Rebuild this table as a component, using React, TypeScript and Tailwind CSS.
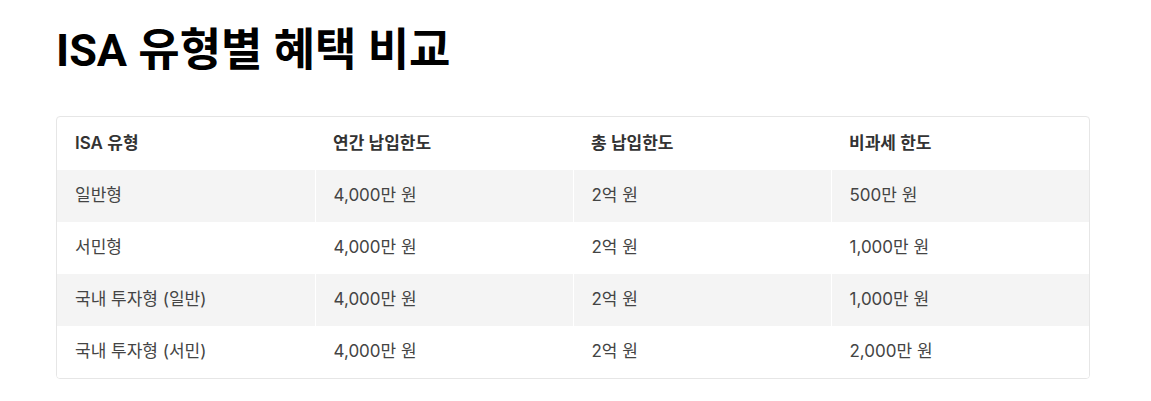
import React from "react";

const rows = [
  ["일반형", "4,000만 원", "2억 원", "500만 원"],
  ["서민형", "4,000만 원", "2억 원", "1,000만 원"],
  ["국내 투자형 (일반)", "4,000만 원", "2억 원", "1,000만 원"],
  ["국내 투자형 (서민)", "4,000만 원", "2억 원", "2,000만 원"],
];

const headers = ["ISA 유형", "연간 납입한도", "총 납입한도", "비과세 한도"];

export default function App() {
  return (
    <div className="min-h-screen bg-white pl-[56px] pr-[61px] pt-[24px]">
      <h1
        className="text-[45px] font-bold leading-[54px] text-black"
        style={{ fontFamily: "Roboto, 'Noto Sans CJK KR', sans-serif" }}
      >
        ISA 유형별 혜택 비교
      </h1>

      <div
        className="mt-[38px] overflow-hidden rounded-[4px] border border-[#e6e6e6]"
        style={{ fontFamily: "Inter, 'Noto Sans CJK KR', sans-serif" }}
      >
        <table className="w-full table-fixed border-collapse">
          <thead>
            <tr>
              {headers.map((h) => (
                <th
                  key={h}
                  className="h-[53px] px-[18px] text-left text-[17px] font-semibold text-[#333]"
                >
                  {h}
                </th>
              ))}
            </tr>
          </thead>
          <tbody>
            {rows.map((r, i) => (
              <tr key={i} className={i % 2 === 0 ? "bg-[#f4f4f4]" : "bg-white"}>
                {r.map((c, j) => (
                  <td
                    key={j}
                    className={
                      "h-[52px] px-[18px] text-[17px] text-[#444] " +
                      (j < 3 ? "border-r border-white" : "")
                    }
                  >
                    {c}
                  </td>
                ))}
              </tr>
            ))}
          </tbody>
        </table>
      </div>
    </div>
  );
}
